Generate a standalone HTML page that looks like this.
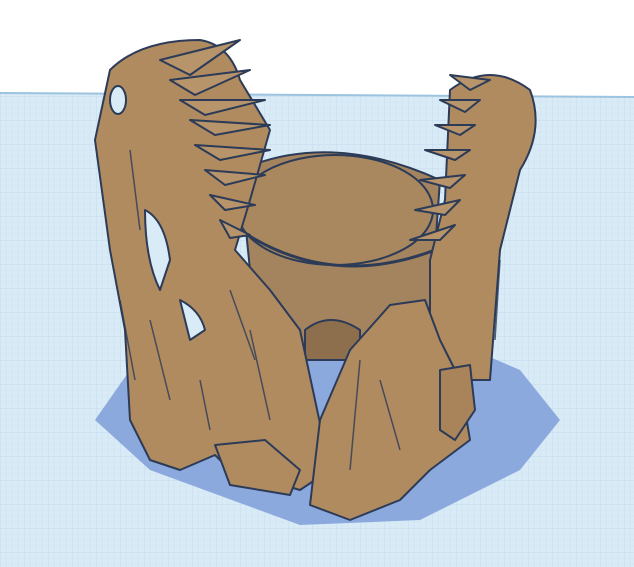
<!DOCTYPE html>
<html><head><style>html,body{margin:0;padding:0;width:634px;height:567px;overflow:hidden;background:#fff}</style></head>
<body>
<svg width="634" height="567" viewBox="0 0 634 567" xmlns="http://www.w3.org/2000/svg">
<defs>
<pattern id="g" width="24" height="24" patternUnits="userSpaceOnUse">
<rect width="24" height="24" fill="#d8ebf6"/>
<path d="M0 0H24M0 0V24" stroke="#c3dbec" stroke-width="1"/>
<path d="M0 6H24M0 12H24M0 18H24M6 0V24M12 0V24M18 0V24" stroke="#cfe3f1" stroke-width="0.6"/>
</pattern>
</defs>
<rect width="634" height="567" fill="#fff"/>
<polygon points="0,93 634,97 634,567 0,567" fill="url(#g)"/>
<line x1="0" y1="93" x2="634" y2="97" stroke="#9cc3df" stroke-width="2"/>
<!-- shadow -->
<path d="M130 370 L95 420 L150 470 L300 525 L420 520 L520 470 L560 420 L520 370 L450 340 Z" fill="#7f9ed9" opacity="0.85"/>
<g stroke="#2c3b57" stroke-width="2" stroke-linejoin="round">
<!-- cup -->
<path d="M240 170 Q330 130 440 180 L430 320 Q400 360 330 355 Q270 350 255 320 Z" fill="#a4835f"/>
<ellipse cx="335" cy="210" rx="98" ry="55" fill="#a9885f"/>
<path d="M240 230 Q330 290 435 250" fill="none" stroke-width="3"/>
<path d="M305 330 Q330 310 360 330 L360 360 L305 360 Z" fill="#8d6f4d"/>
<!-- left skull -->
<path d="M110 70 Q140 40 200 40 Q230 45 240 80 L270 130 L250 200 L235 250 L270 290 L300 330 L330 470 L300 490 L230 470 L215 455 L180 470 L150 460 L130 420 L125 330 L110 250 L95 140 Z" fill="#b18b60"/>
<path d="M145 210 Q165 220 170 260 L160 290 Q145 260 145 210 Z" fill="#d8ebf6"/>
<path d="M180 300 Q200 310 205 330 L190 340 Z" fill="#d8ebf6"/>
<ellipse cx="118" cy="100" rx="8" ry="14" fill="#d8ebf6"/>
<path d="M215 445 L265 440 L300 470 L290 495 L230 485 Z" fill="#b18b60"/>
<!-- left teeth -->
<g fill="#b8946a">
<path d="M160 60 L240 40 L190 75Z"/><path d="M170 80 L250 70 L195 95Z"/>
<path d="M180 100 L265 100 L205 115Z"/><path d="M190 120 L270 125 L215 135Z"/>
<path d="M195 145 L270 150 L220 160Z"/><path d="M205 170 L265 175 L225 185Z"/>
<path d="M210 195 L255 205 L225 210Z"/><path d="M220 220 L250 235 L230 238Z"/>
</g>
<!-- right jaw -->
<path d="M450 90 Q490 60 530 90 Q545 130 520 170 L505 230 L500 250 L490 380 L460 380 L430 330 L430 260 L445 200 Z" fill="#b18b60"/>
<g fill="#b8946a">
<path d="M490 80 L450 75 L470 90Z"/><path d="M480 100 L440 100 L465 112Z"/>
<path d="M475 125 L435 125 L460 135Z"/><path d="M470 150 L425 150 L455 160Z"/>
<path d="M465 175 L420 180 L450 188Z"/><path d="M460 200 L415 210 L445 215Z"/>
<path d="M455 225 L410 240 L440 240Z"/>
</g>
<!-- front right plate -->
<path d="M390 305 L425 300 L440 340 L460 380 L470 440 L430 470 L400 500 L350 520 L310 505 L320 420 L350 350 Z" fill="#b18b60"/>
<path d="M440 370 L470 365 L475 410 L455 440 L440 430 Z" fill="#a9845a"/>
</g>
<g stroke="#2c3b57" stroke-width="1.5" fill="none" opacity="0.8">
<path d="M130 150 L140 230 M150 320 L170 400 M200 380 L210 430 M250 330 L270 420 M360 360 L350 470 M380 380 L400 450 M500 260 L495 340 M120 300 L135 380 M230 290 L255 360"/>
</g>
</svg>
</body></html>
